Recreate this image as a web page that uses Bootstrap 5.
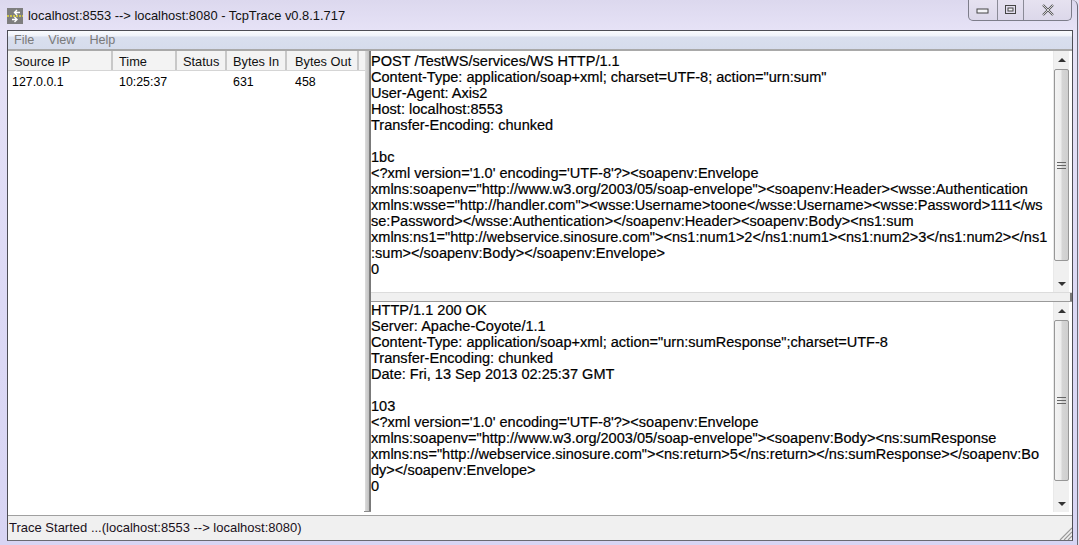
<!DOCTYPE html>
<html lang="en">
<head>
<meta charset="utf-8">
<title>TcpTrace</title>
<link href="https://cdn.jsdelivr.net/npm/bootstrap@5.3.0/dist/css/bootstrap.min.css" rel="stylesheet">
<style>
html,body{width:1079px;height:545px;overflow:hidden;margin:0}
body{background:#e4e0f2;font-family:"Liberation Sans",Arial,sans-serif;font-size:13px;color:#000}
.win-shell{width:1078px;height:545px;padding:0 4px 0 7px;background:linear-gradient(180deg,#dcd8ee 0,#e6e2f6 30px,#dcd9f5 300px,#d8d5f4 100%);border-right:1px solid #6b6b78;border-top-right-radius:6px}
.cap-bar{height:30px;flex:none}
.app-ico{width:16px;height:16px;margin-top:1px}
.cap-text{font-size:12.9px;color:#111;margin-left:5px;padding-top:1px}
.cap-btns{width:104px;height:21px;margin-right:1px;border:1px solid #7d7d8a;border-top:0;border-radius:0 0 5px 5px;background:linear-gradient(180deg,#e6e2f0,#dcd8ea)}
.cap-btn{height:100%;border-right:1px solid #8a8a96}
.cap-btn:last-child{border-right:0}
.min-btn{width:29px}.max-btn{width:26px}
.client{height:511px;flex:none;border:1px solid #4d4d55;border-bottom-color:#6a6a72;background:#f0f0f0}
.menu-strip{height:20px;background:linear-gradient(180deg,#fafbfe 0,#f0f3fa 25%,#d9dfee 35%,#d6dcec 100%);border-bottom:2px solid #a9a9a9;color:#7a7a7a;padding:0 0 0 6px;font-size:12.6px;gap:14px}
.work{height:464px;background:#fff}
.list-side{width:357px;background:#fff}
.hdr-row{height:20px;background:#f3f3f3;border-bottom:1px solid #d5d5d5}
.hdr-cell{border-right:2px solid #c8c8c8;padding:3px 0 0 6px;line-height:16px;color:#111;font-size:12.8px}
.c1{width:105px}.c2{width:64px}.c3{width:50px}.c4{width:60px}.c5{width:72px;padding-left:8px}.c6{flex:1}
.data-row{height:19px;line-height:17px;padding-top:3px;font-size:12.4px}
.data-row>span{display:block}
.d1{width:105px;padding-left:4px}.d2{width:64px;padding-left:6px}.d3{width:50px}.d4{width:60px;padding-left:6px}.d5{width:72px;padding-left:8px}
.split-v{width:6px;margin-bottom:3px;background:linear-gradient(90deg,#dcdcdc 0,#c4c4c4 60%,#808080 70%,#777 100%);position:relative}
.split-v::after{content:"";position:absolute;left:-1px;bottom:0;width:7px;height:1px;background:#8a8a8a}
.panes{flex:1;min-width:0;margin-right:3px}
.pane-box{background:#fff;min-height:0}
.pane-a{height:241px}
.pane-b{height:213px}
.split-h{height:10px;background:#f0f0f0;border-top:1px solid #dcdcdc;border-bottom:1px solid #9a9a9a;position:relative;margin-right:-3px}
.split-h::after{content:"";position:absolute;right:0;top:0;bottom:0;width:2px;background:#777}
.log-text{margin:0;padding:2px 0 0;font-family:"Liberation Sans",Arial,sans-serif;font-size:14.55px;line-height:16px;color:#000;white-space:pre;flex:1;overflow:hidden;-webkit-text-stroke:.2px #000}
.pane-b .log-text{padding-top:0}
.sbar{width:16px;background:#f0f0f0;border-left:1px solid #e9e9e9}
.pane-b .sbar{margin-bottom:3px}
.sb-btn{height:17px;flex:none}
.tri-up{width:0;height:0;border:4px solid transparent;border-top:0;border-bottom:4px solid #333}
.tri-dn{width:0;height:0;border:4px solid transparent;border-bottom:0;border-top:4px solid #333}
.sb-thumb{flex:1;margin:1px 0 0;border:1px solid #979797;border-radius:2px;background:linear-gradient(90deg,#f3f3f3 0,#ededed 45%,#d5d5d5 55%,#cfcfcf 100%)}
.sb-gap{height:14px;flex:none}
.stat-strip{height:25px;flex:none;border-top:1px solid #a0a0a0;background:#f0f0f0;padding:4px 0 0 1px;line-height:16px;font-size:13px;color:#1a1020}
.stat-grip{width:14px;height:14px;margin-left:auto;align-self:flex-end}
</style>
</head>
<body>
<div class="win-shell d-flex flex-column">
  <div class="cap-bar d-flex align-items-center">
    <svg class="app-ico" viewBox="0 0 16 16" aria-hidden="true">
      <rect width="16" height="16" fill="#7e7e7e"/>
      <path d="M0 8h16" stroke="#e8dc3a" stroke-width="1.6" stroke-dasharray="2 1"/>
      <path d="M3 4.500h5M6 2l2.500 2.500-2.500 2.500" fill="none" stroke="#fff" stroke-width="1.400" transform="rotate(180 8 4.500)"/>
      <path d="M8 11.500h5M10.500 9l2.500 2.500-2.500 2.500" fill="none" stroke="#fff" stroke-width="1.400" transform="translate(-3 0)"/>
    </svg>
    <span class="cap-text">localhost:8553 --&gt; localhost:8080 - TcpTrace v0.8.1.717</span>
    <div class="cap-btns d-flex ms-auto align-self-start">
      <div class="cap-btn min-btn d-flex align-items-center justify-content-center"><svg width="14" height="8" viewBox="0 0 14 8" aria-hidden="true"><rect x="1" y="3" width="11" height="4" fill="#f4f4f8" stroke="#444"/></svg></div>
      <div class="cap-btn max-btn d-flex align-items-center justify-content-center"><svg width="14" height="12" viewBox="0 0 14 12" aria-hidden="true"><rect x="1.500" y="1.500" width="10" height="8" fill="none" stroke="#444"/><rect x="4" y="4" width="5" height="3" fill="#f4f4f8" stroke="#444"/></svg></div>
      <div class="cap-btn d-flex align-items-center justify-content-center flex-grow-1"><svg width="14" height="12" viewBox="0 0 14 12" aria-hidden="true"><path d="M2 1l5 5 5-5M2 11l5-5 5 5" fill="none" stroke="#555" stroke-width="2.200"/><path d="M2 1l5 5 5-5M2 11l5-5 5 5" fill="none" stroke="#f4f4f8" stroke-width=".8"/></svg></div>
    </div>
  </div>
  <div class="client d-flex flex-column">
    <div class="menu-strip d-flex align-items-center"><span>File</span><span>View</span><span>Help</span></div>
    <div class="work d-flex">
      <div class="list-side">
        <div class="hdr-row d-flex">
          <div class="hdr-cell c1">Source IP</div><div class="hdr-cell c2">Time</div><div class="hdr-cell c3">Status</div><div class="hdr-cell c4">Bytes In</div><div class="hdr-cell c5">Bytes Out</div><div class="c6"></div>
        </div>
        <div class="data-row d-flex"><span class="d1">127.0.0.1</span><span class="d2">10:25:37</span><span class="d3"></span><span class="d4">631</span><span class="d5">458</span></div>
      </div>
      <div class="split-v"></div>
      <div class="panes d-flex flex-column">
        <div class="pane-box pane-a d-flex">
          <pre class="log-text">POST /TestWS/services/WS HTTP/1.1
Content-Type: application/soap+xml; charset=UTF-8; action="urn:sum"
User-Agent: Axis2
Host: localhost:8553
Transfer-Encoding: chunked

1bc
&lt;?xml version='1.0' encoding='UTF-8'?&gt;&lt;soapenv:Envelope
xmlns:soapenv="http://www.w3.org/2003/05/soap-envelope"&gt;&lt;soapenv:Header&gt;&lt;wsse:Authentication
xmlns:wsse="http://handler.com"&gt;&lt;wsse:Username&gt;toone&lt;/wsse:Username&gt;&lt;wsse:Password&gt;111&lt;/ws
se:Password&gt;&lt;/wsse:Authentication&gt;&lt;/soapenv:Header&gt;&lt;soapenv:Body&gt;&lt;ns1:sum
xmlns:ns1="http://webservice.sinosure.com"&gt;&lt;ns1:num1&gt;2&lt;/ns1:num1&gt;&lt;ns1:num2&gt;3&lt;/ns1:num2&gt;&lt;/ns1
:sum&gt;&lt;/soapenv:Body&gt;&lt;/soapenv:Envelope&gt;
0</pre>
          <div class="sbar d-flex flex-column">
            <div class="sb-btn d-flex align-items-center justify-content-center"><span class="tri-up"></span></div>
            <div class="sb-thumb d-flex align-items-center justify-content-center"><svg width="9" height="9" viewBox="0 0 9 9" aria-hidden="true"><path d="M0 1.500h9M0 4.500h9M0 7.500h9" stroke="#666"/></svg></div>
            <div class="sb-gap"></div>
            <div class="sb-btn d-flex align-items-center justify-content-center"><span class="tri-dn"></span></div>
          </div>
        </div>
        <div class="split-h"></div>
        <div class="pane-box pane-b d-flex">
          <pre class="log-text">HTTP/1.1 200 OK
Server: Apache-Coyote/1.1
Content-Type: application/soap+xml; action="urn:sumResponse";charset=UTF-8
Transfer-Encoding: chunked
Date: Fri, 13 Sep 2013 02:25:37 GMT

103
&lt;?xml version='1.0' encoding='UTF-8'?&gt;&lt;soapenv:Envelope
xmlns:soapenv="http://www.w3.org/2003/05/soap-envelope"&gt;&lt;soapenv:Body&gt;&lt;ns:sumResponse
xmlns:ns="http://webservice.sinosure.com"&gt;&lt;ns:return&gt;5&lt;/ns:return&gt;&lt;/ns:sumResponse&gt;&lt;/soapenv:Bo
dy&gt;&lt;/soapenv:Envelope&gt;
0</pre>
          <div class="sbar d-flex flex-column">
            <div class="sb-btn d-flex align-items-center justify-content-center"><span class="tri-up"></span></div>
            <div class="sb-thumb d-flex align-items-center justify-content-center"><svg width="9" height="9" viewBox="0 0 9 9" aria-hidden="true"><path d="M0 1.500h9M0 4.500h9M0 7.500h9" stroke="#666"/></svg></div>
            <div class="sb-gap"></div>
            <div class="sb-btn d-flex align-items-center justify-content-center"><span class="tri-dn"></span></div>
          </div>
        </div>
      </div>
    </div>
    <div class="stat-strip d-flex">
      <span>Trace Started ...(localhost:8553 --&gt; localhost:8080)</span>
      <svg class="stat-grip" viewBox="0 0 14 14" aria-hidden="true"><path d="M2 14L14 2M6 14l8-8M10 14l4-4" stroke="#999" stroke-width="1.200"/></svg>
    </div>
  </div>
</div>
<script src="https://cdn.jsdelivr.net/npm/bootstrap@5.3.0/dist/js/bootstrap.bundle.min.js"></script>
</body>
</html>
